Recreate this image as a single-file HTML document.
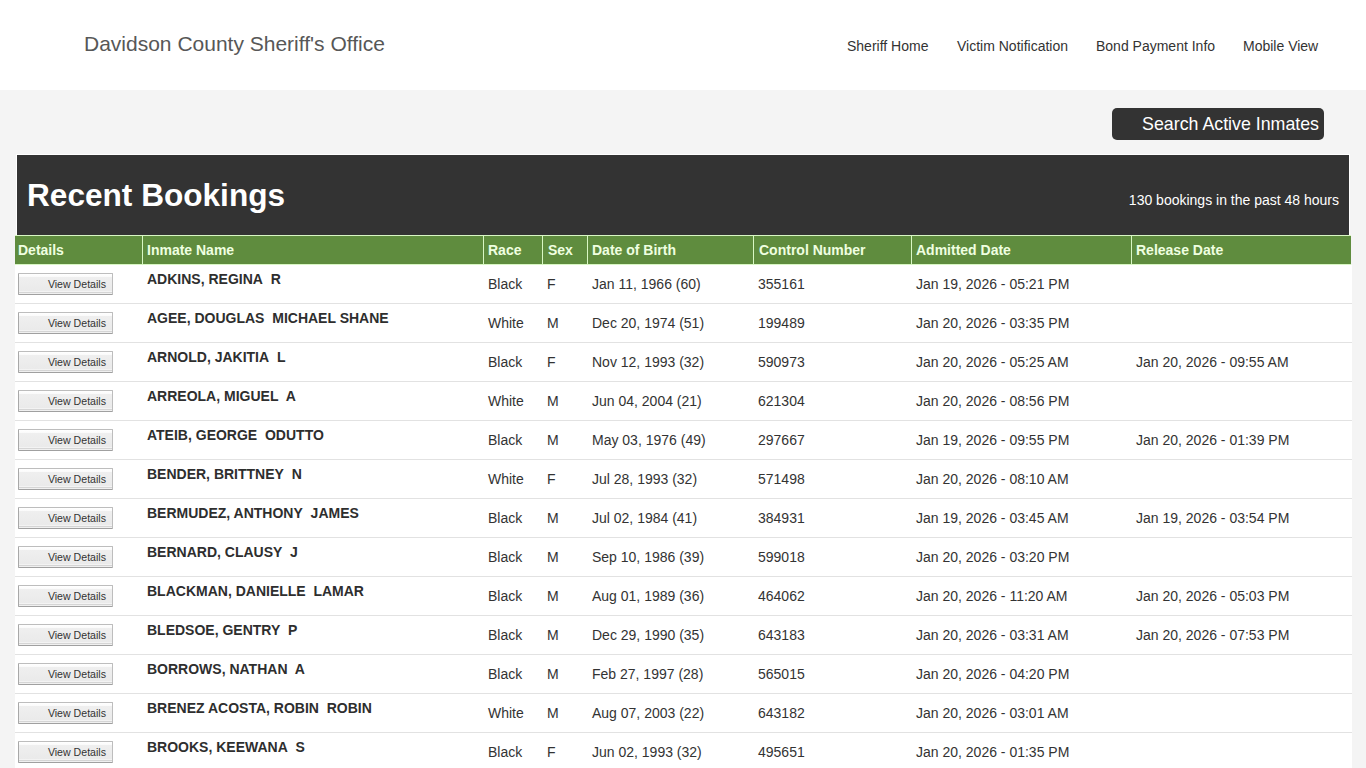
<!DOCTYPE html><html><head><meta charset="utf-8"><title>Recent Bookings</title><style>html,body{margin:0;padding:0;}
body{background:#f4f4f4;font-family:"Liberation Sans",sans-serif;width:1366px;height:768px;overflow:hidden;position:relative;color:#333;}
#hdr{position:absolute;left:0;top:0;width:1366px;height:90px;background:#fff;}
.brand{position:absolute;left:84px;top:32px;font-size:21px;line-height:24px;color:#575757;white-space:nowrap;}
.nav{position:absolute;top:38px;font-size:14px;line-height:16px;color:#333;white-space:nowrap;}
#sbtn{position:absolute;left:1112px;top:108px;width:212px;height:32px;background:#333;border-radius:5px;color:#fff;font-size:17.8px;line-height:32px;text-align:right;box-sizing:border-box;padding-right:5px;white-space:nowrap;}
#panel{position:absolute;left:16px;top:154px;width:1334px;height:81px;background:#333;border:1px solid #fff;border-bottom:0;box-sizing:border-box;}
#panel h1{position:absolute;left:10px;top:22px;margin:0;font-size:31.6px;line-height:36px;font-weight:bold;color:#fff;white-space:nowrap;}
#panel .count{position:absolute;right:10px;top:37px;font-size:14px;line-height:16px;color:#fff;white-space:nowrap;}
#thead{position:absolute;left:15px;top:235px;width:1336px;height:30px;background:#d9f7c4;}
.th{position:absolute;top:1px;height:28px;background:#5f8c3e;box-sizing:border-box;color:#efffe0;font-weight:bold;font-size:14px;line-height:28px;padding-left:4px;white-space:nowrap;}
#tbody{position:absolute;left:15px;top:265px;width:1337px;height:520px;background:#fff;}
.tr{position:absolute;left:0;width:1337px;height:39px;border-bottom:1px solid #e2e2e2;box-sizing:border-box;}
.btn{position:absolute;left:3px;top:8px;width:95px;height:22px;box-sizing:border-box;border:1px solid #bdbdbd;border-left-color:#a8a8a8;border-bottom-color:#a0a0a0;background:linear-gradient(#ffffff 0px,#fafafa 3px,#efefef 3px,#eaeaea 17px,#f3f3f3 17px,#f3f3f3 18px,#d5d5d5 18px,#d5d5d5 19px,#f0f0f0 19px);border-radius:1px;font-size:10.6px;line-height:20px;text-align:right;padding-right:6px;color:#333;white-space:nowrap;}
.nm{position:absolute;left:132px;top:6px;font-size:14px;line-height:16px;font-weight:bold;color:#2e2e2e;white-space:nowrap;}
.td{position:absolute;top:11px;font-size:14px;line-height:16px;padding-left:4px;color:#333;white-space:nowrap;}
</style></head><body>
<div id="hdr"><div class="brand">Davidson County Sheriff's Office</div><a class="nav" style="left:847px">Sheriff Home</a><a class="nav" style="left:957px">Victim Notification</a><a class="nav" style="left:1096px">Bond Payment Info</a><a class="nav" style="left:1243px">Mobile View</a></div>
<div id="sbtn">Search Active Inmates</div>
<div id="panel"><h1>Recent Bookings</h1><div class="count">130 bookings in the past 48 hours</div></div>
<div id="thead">
<div class="th" style="left:0px;width:127px;padding-left:3px">Details</div>
<div class="th" style="left:128px;width:340px;padding-left:4px">Inmate Name</div>
<div class="th" style="left:469px;width:58px;padding-left:4px">Race</div>
<div class="th" style="left:528px;width:44px;padding-left:5px">Sex</div>
<div class="th" style="left:573px;width:165px;padding-left:4px">Date of Birth</div>
<div class="th" style="left:739px;width:157px;padding-left:5px">Control Number</div>
<div class="th" style="left:897px;width:219px;padding-left:4px">Admitted Date</div>
<div class="th" style="left:1117px;width:219px;padding-left:4px">Release Date</div>
</div>
<div id="tbody">
<div class="tr" style="top:0px">
<div class="btn">View Details</div>
<div class="nm">ADKINS, REGINA&nbsp; R</div>
<div class="td" style="left:469px">Black</div>
<div class="td" style="left:528px">F</div>
<div class="td" style="left:573px">Jan 11, 1966 (60)</div>
<div class="td" style="left:739px">355161</div>
<div class="td" style="left:897px">Jan 19, 2026 - 05:21 PM</div>
<div class="td" style="left:1117px"></div>
</div>
<div class="tr" style="top:39px">
<div class="btn">View Details</div>
<div class="nm">AGEE, DOUGLAS&nbsp; MICHAEL SHANE</div>
<div class="td" style="left:469px">White</div>
<div class="td" style="left:528px">M</div>
<div class="td" style="left:573px">Dec 20, 1974 (51)</div>
<div class="td" style="left:739px">199489</div>
<div class="td" style="left:897px">Jan 20, 2026 - 03:35 PM</div>
<div class="td" style="left:1117px"></div>
</div>
<div class="tr" style="top:78px">
<div class="btn">View Details</div>
<div class="nm">ARNOLD, JAKITIA&nbsp; L</div>
<div class="td" style="left:469px">Black</div>
<div class="td" style="left:528px">F</div>
<div class="td" style="left:573px">Nov 12, 1993 (32)</div>
<div class="td" style="left:739px">590973</div>
<div class="td" style="left:897px">Jan 20, 2026 - 05:25 AM</div>
<div class="td" style="left:1117px">Jan 20, 2026 - 09:55 AM</div>
</div>
<div class="tr" style="top:117px">
<div class="btn">View Details</div>
<div class="nm">ARREOLA, MIGUEL&nbsp; A</div>
<div class="td" style="left:469px">White</div>
<div class="td" style="left:528px">M</div>
<div class="td" style="left:573px">Jun 04, 2004 (21)</div>
<div class="td" style="left:739px">621304</div>
<div class="td" style="left:897px">Jan 20, 2026 - 08:56 PM</div>
<div class="td" style="left:1117px"></div>
</div>
<div class="tr" style="top:156px">
<div class="btn">View Details</div>
<div class="nm">ATEIB, GEORGE&nbsp; ODUTTO</div>
<div class="td" style="left:469px">Black</div>
<div class="td" style="left:528px">M</div>
<div class="td" style="left:573px">May 03, 1976 (49)</div>
<div class="td" style="left:739px">297667</div>
<div class="td" style="left:897px">Jan 19, 2026 - 09:55 PM</div>
<div class="td" style="left:1117px">Jan 20, 2026 - 01:39 PM</div>
</div>
<div class="tr" style="top:195px">
<div class="btn">View Details</div>
<div class="nm">BENDER, BRITTNEY&nbsp; N</div>
<div class="td" style="left:469px">White</div>
<div class="td" style="left:528px">F</div>
<div class="td" style="left:573px">Jul 28, 1993 (32)</div>
<div class="td" style="left:739px">571498</div>
<div class="td" style="left:897px">Jan 20, 2026 - 08:10 AM</div>
<div class="td" style="left:1117px"></div>
</div>
<div class="tr" style="top:234px">
<div class="btn">View Details</div>
<div class="nm">BERMUDEZ, ANTHONY&nbsp; JAMES</div>
<div class="td" style="left:469px">Black</div>
<div class="td" style="left:528px">M</div>
<div class="td" style="left:573px">Jul 02, 1984 (41)</div>
<div class="td" style="left:739px">384931</div>
<div class="td" style="left:897px">Jan 19, 2026 - 03:45 AM</div>
<div class="td" style="left:1117px">Jan 19, 2026 - 03:54 PM</div>
</div>
<div class="tr" style="top:273px">
<div class="btn">View Details</div>
<div class="nm">BERNARD, CLAUSY&nbsp; J</div>
<div class="td" style="left:469px">Black</div>
<div class="td" style="left:528px">M</div>
<div class="td" style="left:573px">Sep 10, 1986 (39)</div>
<div class="td" style="left:739px">599018</div>
<div class="td" style="left:897px">Jan 20, 2026 - 03:20 PM</div>
<div class="td" style="left:1117px"></div>
</div>
<div class="tr" style="top:312px">
<div class="btn">View Details</div>
<div class="nm">BLACKMAN, DANIELLE&nbsp; LAMAR</div>
<div class="td" style="left:469px">Black</div>
<div class="td" style="left:528px">M</div>
<div class="td" style="left:573px">Aug 01, 1989 (36)</div>
<div class="td" style="left:739px">464062</div>
<div class="td" style="left:897px">Jan 20, 2026 - 11:20 AM</div>
<div class="td" style="left:1117px">Jan 20, 2026 - 05:03 PM</div>
</div>
<div class="tr" style="top:351px">
<div class="btn">View Details</div>
<div class="nm">BLEDSOE, GENTRY&nbsp; P</div>
<div class="td" style="left:469px">Black</div>
<div class="td" style="left:528px">M</div>
<div class="td" style="left:573px">Dec 29, 1990 (35)</div>
<div class="td" style="left:739px">643183</div>
<div class="td" style="left:897px">Jan 20, 2026 - 03:31 AM</div>
<div class="td" style="left:1117px">Jan 20, 2026 - 07:53 PM</div>
</div>
<div class="tr" style="top:390px">
<div class="btn">View Details</div>
<div class="nm">BORROWS, NATHAN&nbsp; A</div>
<div class="td" style="left:469px">Black</div>
<div class="td" style="left:528px">M</div>
<div class="td" style="left:573px">Feb 27, 1997 (28)</div>
<div class="td" style="left:739px">565015</div>
<div class="td" style="left:897px">Jan 20, 2026 - 04:20 PM</div>
<div class="td" style="left:1117px"></div>
</div>
<div class="tr" style="top:429px">
<div class="btn">View Details</div>
<div class="nm">BRENEZ ACOSTA, ROBIN&nbsp; ROBIN</div>
<div class="td" style="left:469px">White</div>
<div class="td" style="left:528px">M</div>
<div class="td" style="left:573px">Aug 07, 2003 (22)</div>
<div class="td" style="left:739px">643182</div>
<div class="td" style="left:897px">Jan 20, 2026 - 03:01 AM</div>
<div class="td" style="left:1117px"></div>
</div>
<div class="tr" style="top:468px">
<div class="btn">View Details</div>
<div class="nm">BROOKS, KEEWANA&nbsp; S</div>
<div class="td" style="left:469px">Black</div>
<div class="td" style="left:528px">F</div>
<div class="td" style="left:573px">Jun 02, 1993 (32)</div>
<div class="td" style="left:739px">495651</div>
<div class="td" style="left:897px">Jan 20, 2026 - 01:35 PM</div>
<div class="td" style="left:1117px"></div>
</div>
</div>
</body></html>
